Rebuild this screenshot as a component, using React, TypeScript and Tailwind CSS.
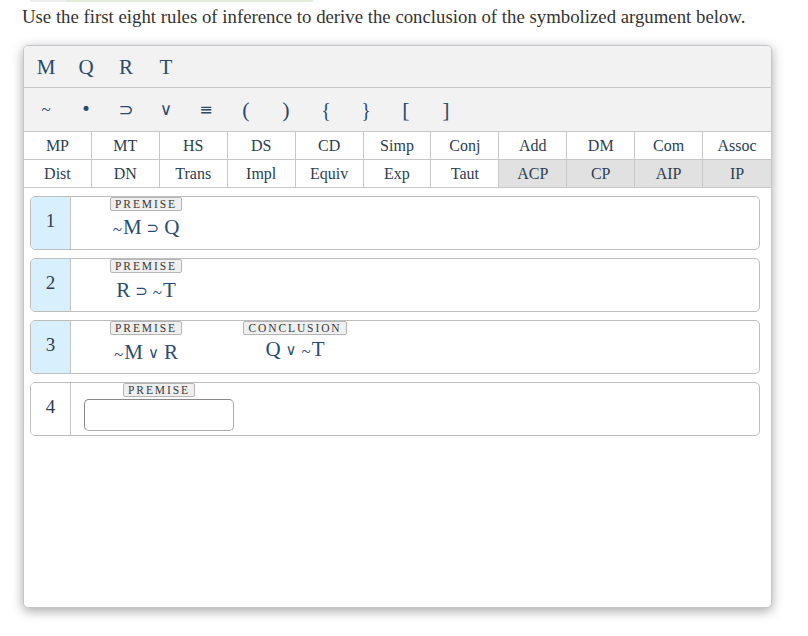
import React from "react";

const vars = ["M", "Q", "R", "T"];
const ops: { c: string; cls: string }[] = [
  { c: "~", cls: "text-[17px]" },
  { c: "•", cls: "font-['DejaVu_Sans'] text-[17px]" },
  { c: "⊃", cls: "font-['DejaVu_Sans'] text-[18px]" },
  { c: "∨", cls: "font-['DejaVu_Sans'] text-[17px]" },
  { c: "≡", cls: "font-['DejaVu_Sans'] text-[16px]" },
  { c: "(", cls: "text-[22px]" },
  { c: ")", cls: "text-[22px]" },
  { c: "{", cls: "text-[20px]" },
  { c: "}", cls: "text-[20px]" },
  { c: "[", cls: "text-[22px]" },
  { c: "]", cls: "text-[22px]" },
];
const rules1 = ["MP", "MT", "HS", "DS", "CD", "Simp", "Conj", "Add", "DM", "Com", "Assoc"];
const rules2 = ["Dist", "DN", "Trans", "Impl", "Equiv", "Exp", "Taut", "ACP", "CP", "AIP", "IP"];

function Tag({ t }: { t: string }) {
  return (
    <div className="h-[14px] px-[4px] border border-[#b5b5b5] rounded-[2px] bg-[#efefef] text-[11.5px] leading-[12px] tracking-[1.9px] text-[#3a3a3a] flex items-center">
      {t}
    </div>
  );
}

function Op({ c }: { c: string }) {
  return <span className="font-['DejaVu_Sans'] text-[15px] mx-[5px] relative top-[-1px]">{c}</span>;
}
function Tl() {
  return <span className="text-[17px] mr-[1px] relative top-[1px]">~</span>;
}

function Formula({ children, mt }: { children: React.ReactNode; mt: string }) {
  return (
    <div className={`text-[21px] leading-[24px] text-[#2a4c72] whitespace-nowrap ${mt}`}>{children}</div>
  );
}

function Row({ n, filled, children }: { n: number; filled: boolean; children: React.ReactNode }) {
  return (
    <div className="h-[54px] flex border border-[#bdbdbd] rounded-[5px] overflow-hidden">
      <div
        className={`w-[40px] shrink-0 border-r border-[#c4c4c4] flex items-center justify-center pb-[3px] text-[19px] text-[#2d3e50] ${
          filled ? "bg-[#d8f0fd]" : "bg-white"
        }`}
      >
        {n}
      </div>
      <div className="flex items-start">{children}</div>
    </div>
  );
}

export default function App() {
  return (
    <div className="w-[808px] h-[636px] bg-white font-['Liberation_Serif',serif] overflow-hidden">
      <div className="flex h-[2px]">
        <div className="ml-[30px] w-[37px] bg-[#ececec]" />
        <div className="w-[246px] bg-[#e2ebd6]" />
      </div>
      <p className="ml-[22px] mt-[5px] text-[18.8px] leading-[20px] text-[#333]">
        Use the first eight rules of inference to derive the conclusion of the symbolized argument below.
      </p>
      <div className="ml-[23px] mt-[18px] w-[749px] h-[563px] border border-[#c3c7cc] rounded-[5px] bg-white shadow-[0_3px_12px_rgba(0,0,0,0.35)] overflow-hidden">
        <div className="h-[42px] bg-[#f2f2f2] border-b border-[#c8c8c8] flex items-center pl-[2px]">
          {vars.map((v) => (
            <div key={v} className="w-[40px] text-center text-[21px] leading-[22px] text-[#2b4a6b]">
              {v}
            </div>
          ))}
        </div>
        <div className="h-[43px] bg-[#f2f2f2] flex items-center pl-[2px]">
          {ops.map((o) => (
            <div key={o.c} className={`w-[40px] text-center text-[#2b4a6b] ${o.cls}`}>
              {o.c}
            </div>
          ))}
        </div>
        <div className="border-t border-[#c8c8c8]">
          {[rules1, rules2].map((r, ri) => (
            <div key={ri} className="grid grid-cols-11 h-[28px] border-b border-[#c8c8c8]">
              {r.map((x, i) => (
                <div
                  key={x}
                  className={`flex items-center justify-center text-[16px] text-[#2c3e50] ${
                    i < 10 ? "border-r border-[#c8c8c8]" : ""
                  } ${ri === 1 && i >= 7 ? "bg-[#e1e1e1]" : "bg-white"}`}
                >
                  {x}
                </div>
              ))}
            </div>
          ))}
        </div>
        <div className="pl-[6px] pr-[11px] pt-[8px] flex flex-col gap-[8px]">
          <Row n={1} filled>
            <div className="ml-[13px] w-[124px] flex flex-col items-center">
              <Tag t="PREMISE" />
              <Formula mt="mt-[4px]">
                <Tl />M<Op c="⊃" />Q
              </Formula>
            </div>
          </Row>
          <Row n={2} filled>
            <div className="ml-[13px] w-[124px] flex flex-col items-center">
              <Tag t="PREMISE" />
              <Formula mt="mt-[5px]">
                R<Op c="⊃" />
                <Tl />T
              </Formula>
            </div>
          </Row>
          <Row n={3} filled>
            <div className="ml-[13px] w-[124px] flex flex-col items-center">
              <Tag t="PREMISE" />
              <Formula mt="mt-[5px]">
                <Tl />M<Op c="∨" />R
              </Formula>
            </div>
            <div className="ml-[35px] w-[104px] flex flex-col items-center">
              <Tag t="CONCLUSION" />
              <Formula mt="mt-[2px]">
                Q<Op c="∨" />
                <Tl />T
              </Formula>
            </div>
          </Row>
          <Row n={4} filled={false}>
            <div className="ml-[13px] w-[150px] flex flex-col items-center">
              <Tag t="PREMISE" />
              <div className="mt-[2px] w-[150px] h-[32px] border border-[#a9a9a9] border-t-[#888] border-l-[#888] rounded-[5px] bg-white" />
            </div>
          </Row>
        </div>
      </div>
    </div>
  );
}
